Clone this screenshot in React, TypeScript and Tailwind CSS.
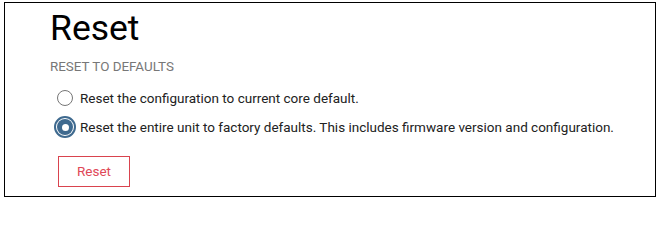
export default function App() {
  return (
    <div className="w-[660px] h-[200px] bg-white pt-[2px] pl-[4px] font-['Roboto',sans-serif]">
      <div className="w-[652px] h-[195px] border border-black pl-[45px] pt-[4px]">
        <h1 className="text-[35.5px] leading-[43px] font-normal text-black">Reset</h1>
        <div className="mt-[7px] text-[13.4px] leading-[20px] text-[#777] uppercase">Reset to defaults</div>

        <div className="mt-[10px] ml-[4px] flex flex-col gap-[7px] text-[13.5px] text-[#222]">
          <label className="flex items-center gap-[4px] h-[22px]">
            <span className="w-[22px] h-[22px] flex items-center justify-center">
              <span className="w-[16px] h-[16px] rounded-full border border-[#767676] bg-white" />
            </span>
            Reset the configuration to current core default.
          </label>
          <label className="flex items-center gap-[4px] h-[22px]">
            <span className="w-[22px] h-[22px] flex items-center justify-center rounded-full border-2 border-[#3f6a8f]">
              <span className="w-[16px] h-[16px] rounded-full bg-[#3f6a8f] flex items-center justify-center">
                <span className="w-[7px] h-[7px] rounded-full bg-white" />
              </span>
            </span>
            Reset the entire unit to factory defaults. This includes firmware version and configuration.
          </label>
        </div>

        <button className="mt-[18px] ml-[8px] w-[72px] h-[31px] border border-[#d9434e] text-[13.5px] text-[#e04858] bg-white">
          Reset
        </button>
      </div>
    </div>
  )
}
